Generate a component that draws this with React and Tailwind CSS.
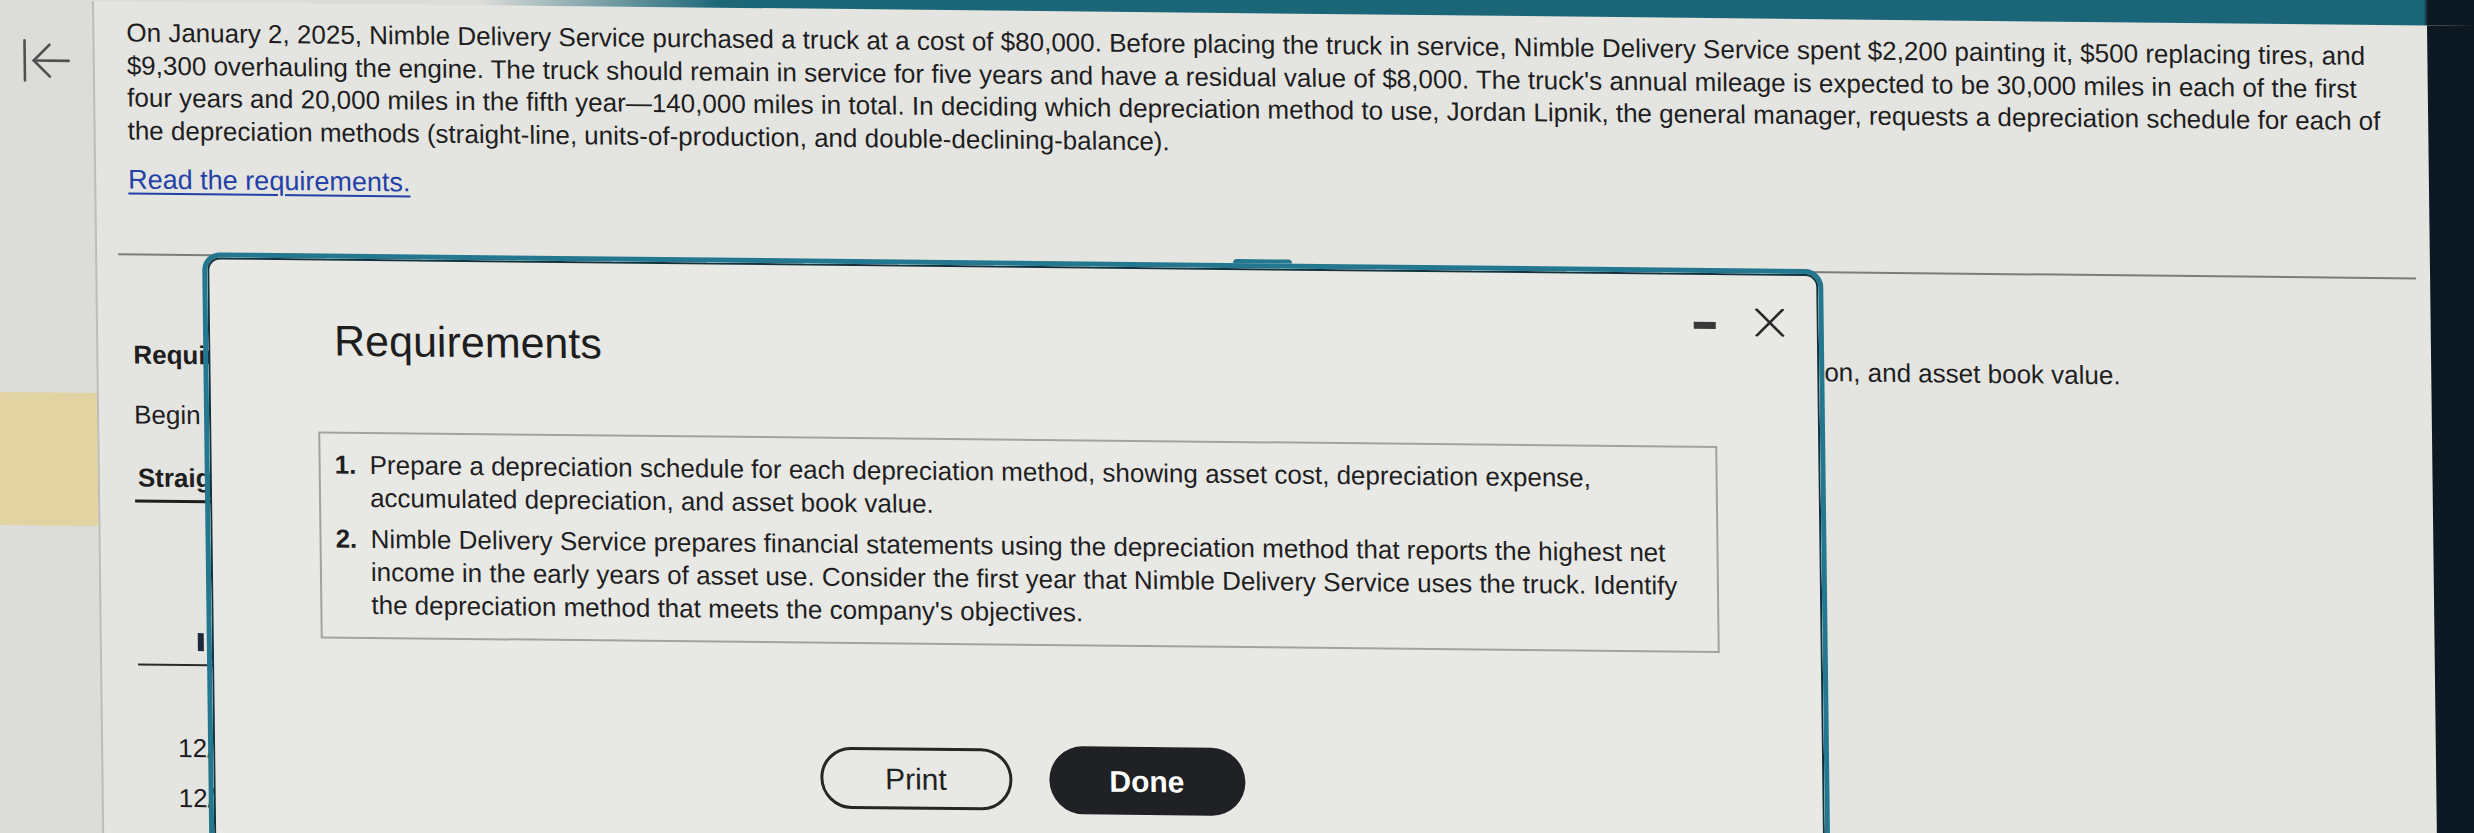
import React from "react";

function BackIcon() {
  return (
    <svg width="52" height="50" viewBox="0 0 52 50" fill="none" stroke="#505050" strokeWidth="2.6" strokeLinecap="round" strokeLinejoin="round">
      <line x1="4" y1="4" x2="4" y2="44" />
      <line x1="13" y1="24" x2="48" y2="24" />
      <polyline points="29,8 13,24 29,40" />
    </svg>
  );
}

function CloseIcon() {
  return (
    <svg width="30" height="28" viewBox="0 0 30 28" fill="none" stroke="#2a2a2a" strokeWidth="2.6" strokeLinecap="square">
      <line x1="2" y1="1" x2="28" y2="27" />
      <line x1="28" y1="1" x2="2" y2="27" />
    </svg>
  );
}

const paragraphLines = [
  "On January 2, 2025, Nimble Delivery Service purchased a truck at a cost of $80,000. Before placing the truck in service, Nimble Delivery Service spent $2,200 painting it, $500 replacing tires, and",
  "$9,300 overhauling the engine. The truck should remain in service for five years and have a residual value of $8,000. The truck's annual mileage is expected to be 30,000 miles in each of the first",
  "four years and 20,000 miles in the fifth year\u2014140,000 miles in total. In deciding which depreciation method to use, Jordan Lipnik, the general manager, requests a depreciation schedule for each of",
  "the depreciation methods (straight-line, units-of-production, and double-declining-balance).",
];

const requirements = [
  [
    "Prepare a depreciation schedule for each depreciation method, showing asset cost, depreciation expense,",
    "accumulated depreciation, and asset book value.",
  ],
  [
    "Nimble Delivery Service prepares financial statements using the depreciation method that reports the highest net",
    "income in the early years of asset use. Consider the first year that Nimble Delivery Service uses the truck. Identify",
    "the depreciation method that meets the company's objectives.",
  ],
];

function Modal() {
  return (
    <div className="absolute left-[211px] top-[250px] h-[640px] w-[1621px] rounded-t-[18px] border-[5px] border-[#23778f]">
      <span className="absolute left-[1026px] top-[-9px] h-[4px] w-[59px] rounded-t-[4px] bg-[#23778f]" />
      <div className="flex h-full flex-col rounded-t-[13px] border-2 border-b-0 border-[#13323c] bg-[#e8e8e5]">
        <div className="flex items-start justify-between pt-[33px]">
          <h2 className="mt-[23px] pl-[124px] text-[43px] font-normal leading-[48px] text-[#1e1e1e]">Requirements</h2>
          <div className="flex items-start gap-[39px] pr-[32px]">
            <div className="mt-[14px] h-[7px] w-[22px] bg-[#383838]" />
            <CloseIcon />
          </div>
        </div>
        <div className="ml-[107px] mr-[101px] mt-[67px] border-2 border-[#a2a2a0] pb-[15px] pl-[14px] pt-[15px] text-[26px] leading-[33px] text-[#1f1f1f]">
          {requirements.map((lines, i) => (
            <div key={i} className={"flex " + (i > 0 ? "mt-[8px]" : "")}>
              <span className="w-[35px] shrink-0 font-bold">{i + 1}.</span>
              <div>
                {lines.map((l) => (
                  <div key={l} className="whitespace-nowrap">{l}</div>
                ))}
              </div>
            </div>
          ))}
        </div>
        <div className="mt-[100px] flex items-center justify-center gap-[37px] pl-[27px]">
          <button className="h-[62px] w-[192px] rounded-full border-[3px] border-[#262626] bg-transparent text-[30px] text-[#222]">Print</button>
          <button className="h-[68px] w-[196px] rounded-full bg-[#1f2124] text-[30px] font-bold text-white">Done</button>
        </div>
      </div>
    </div>
  );
}

export default function App() {
  return (
    <div className="relative h-[833px] w-[2474px] overflow-hidden bg-[linear-gradient(90deg,#dcdcd9_0px,#dcdcd9_480px,#1b6778_720px,#1a6577_2424px,#0c1822_2428px)] font-['Liberation_Sans',Arial,sans-serif] text-[#1c1c1c]">
      <div className="relative ml-[-12px] flex h-[833px] w-[2486px] origin-top-left bg-[#e4e4e1] [transform:skew(0.7deg,0.6deg)]">
        <aside className="flex w-[106px] shrink-0 flex-col border-r-2 border-[#bdbdbb] bg-[#dcdcd9]">
          <div className="pl-[32px] pt-[36px]">
            <BackIcon />
          </div>
          <div className="mt-[306px] h-[133px] bg-[#e2d3a2]" />
        </aside>

        <main className="relative flex-1 pl-[21px] pr-[14px]">
          <div className="pl-[11px] pt-[15px] text-[26px] leading-[32.5px] text-[#1e1e1e]">
            {paragraphLines.map((l) => (
              <div key={l} className="whitespace-nowrap">{l}</div>
            ))}
            <a href="#" className="mt-[17px] inline-block text-[27px] text-[#2340a8] underline decoration-2 underline-offset-4">
              Read the requirements.
            </a>
          </div>
          <div className="mt-[57px] h-[2px] bg-[#7c7c7c]" />

          <section className="pl-[14px] text-[26px] leading-[30px] text-[#1e1e1e]">
            <p className="mt-[84px] whitespace-nowrap">
              <span className="font-bold">Requirement 1.</span> Prepare a depreciation schedule for each depreciation method, showing asset cost, depreciation expense, accumulated depreciation, and asset book value.
            </p>
            <p className="mt-[30px] whitespace-nowrap">Begin by preparing a straight-line depreciation schedule.</p>
            <div className="mt-[33px]">
              <span className="inline-block border-b-[3px] border-[#1e1e1e] pb-[7px] pl-[3px] pr-[40px] font-bold">Straight-Line Depreciation Schedule</span>
            </div>
            <div className="ml-[61px] mt-[130px] h-[18px] w-[6px] bg-[#1c2b3a]" />
            <div className="ml-[1px] mt-[13px] h-[2px] w-[300px] bg-[#2a2a2a]" />
            <div className="ml-[40px] mt-[67px]">12/31/2025</div>
            <div className="ml-[40px] mt-[20px]">12/31/2026</div>
          </section>
        </main>

        <div className="w-[47px] shrink-0 bg-[#0c1822]" />
        <Modal />
      </div>
    </div>
  );
}
